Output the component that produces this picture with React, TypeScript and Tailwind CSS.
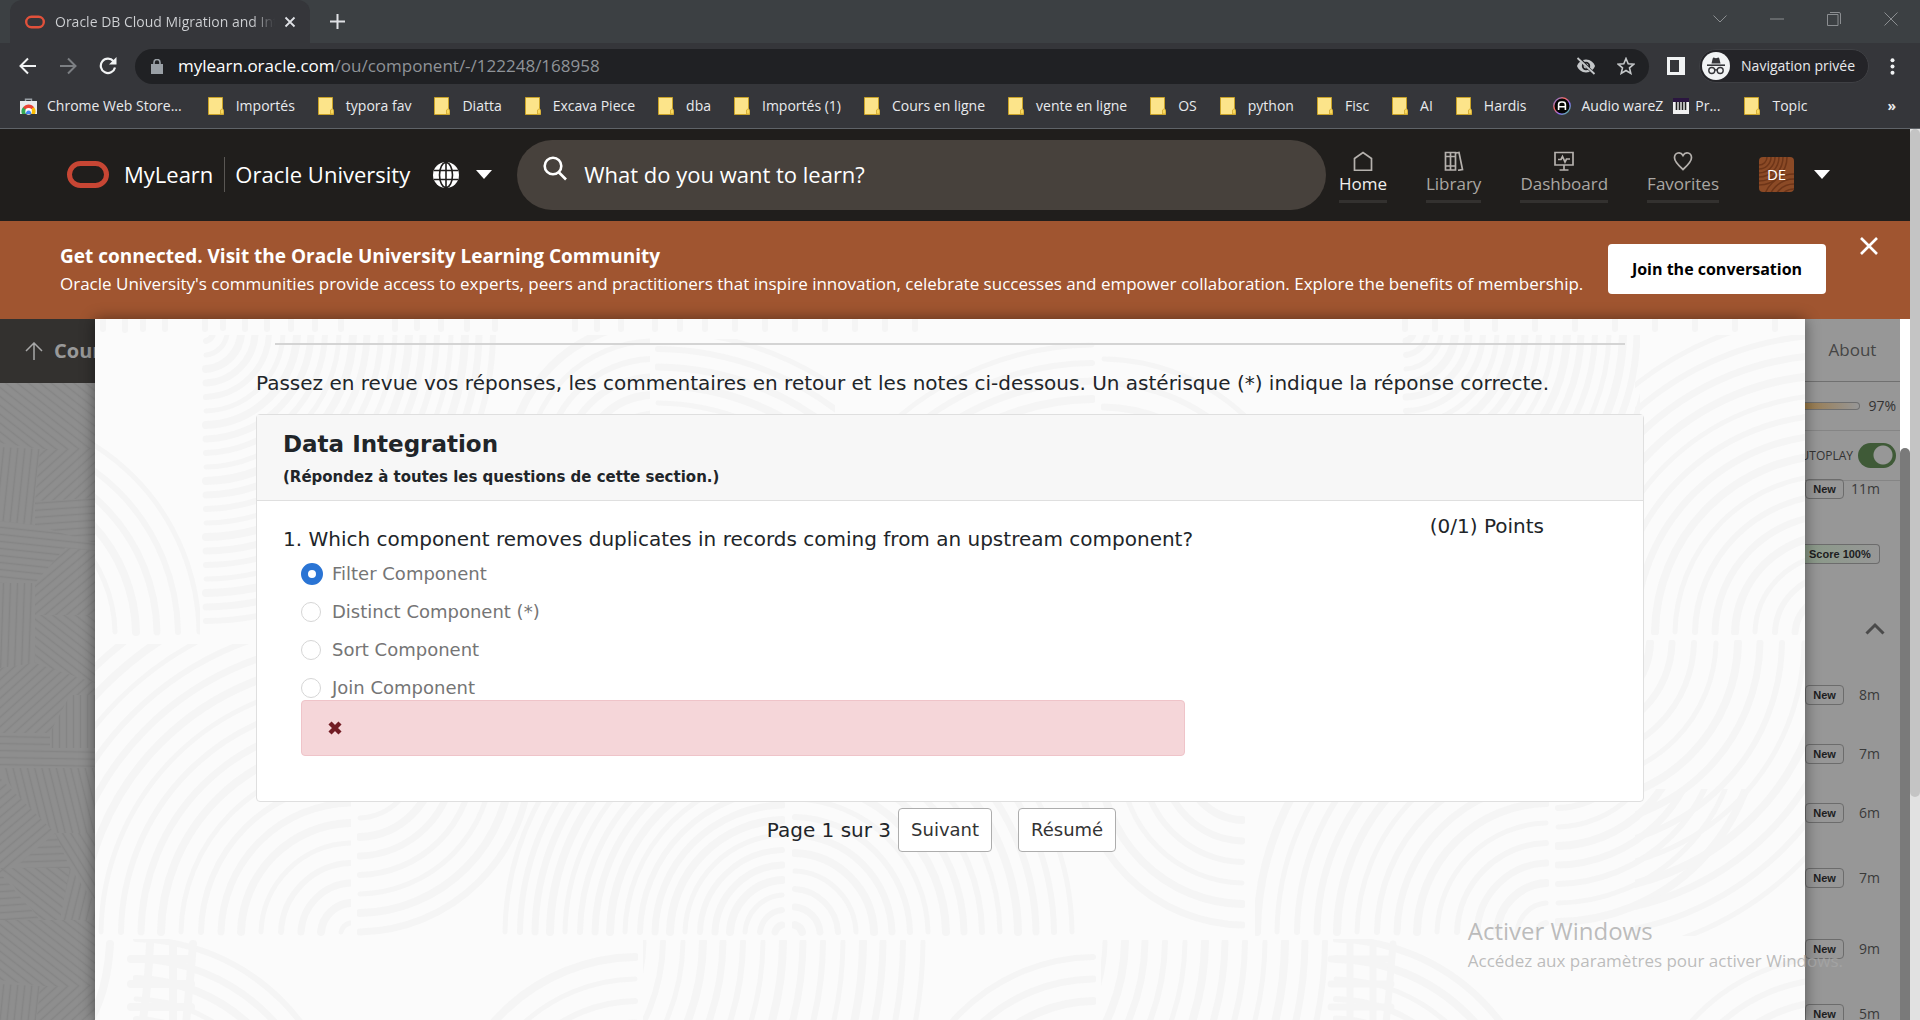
import React from "react";

const UI = "font-['Open_Sans',sans-serif]";
const ORACLE = "font-['Open_Sans',sans-serif]";
const EXAM = "font-['DejaVu_Sans',sans-serif]";

type Bookmark = { label: string; icon?: "store" | "audio" | "piano" };

const bookmarks: Bookmark[] = [
  { label: "Chrome Web Store...", icon: "store" },
  { label: "Importés" },
  { label: "typora fav" },
  { label: "Diatta" },
  { label: "Excava Piece" },
  { label: "dba" },
  { label: "Importés (1)" },
  { label: "Cours en ligne" },
  { label: "vente en ligne" },
  { label: "OS" },
  { label: "python" },
  { label: "Fisc" },
  { label: "AI" },
  { label: "Hardis" },
  { label: "Audio wareZ", icon: "audio" },
  { label: "Pr...", icon: "piano" },
  { label: "Topic" },
];

const bookmarkSpacing = {
  store: "mr-[26px] gap-[10px]",
  audio: "mr-[26px] ml-1 gap-[10px]",
  piano: "mr-[24px] -ml-4 gap-[6px]",
  folder: "mr-[23px] gap-3",
};

function FolderIcon() {
  return (
    <svg width="16" height="18" viewBox="0 0 16 18" className="shrink-0">
      <path d="M.5.5h14v13l1 1v3H.5z" fill="#fce48a" stroke="#c9a227" />
      <path d="M12.5 17v-4l2-1.5 1 2V17z" fill="#f9d95c" stroke="#d9b13a" />
    </svg>
  );
}

function StoreIcon() {
  return (
    <svg width="17" height="17" viewBox="0 0 17 17" className="shrink-0">
      <path d="M5.5 3V1.2h6V3" fill="none" stroke="#9aa0a6" strokeWidth="1.4" />
      <path d="M0 3h17v13H0z" fill="#e8eaed" />
      <path d="M2 16a6.6 6.6 0 0 1 2-7.6L8 14v2z" fill="#34a853" />
      <path d="M3.2 9.4a6.6 6.6 0 0 1 11 0L12 11H5z" fill="#ea4335" />
      <path d="M14 9.3a6.6 6.6 0 0 1 1 6.7H9l3-5.4z" fill="#fbbc04" />
      <circle cx="8.6" cy="13.4" r="3.3" fill="#fff" />
      <path d="M6 16a2.7 2.7 0 1 1 5.2 0z" fill="#4285f4" />
    </svg>
  );
}

function AudioIcon() {
  return (
    <svg width="18" height="18" viewBox="0 0 18 18" className="shrink-0">
      <defs>
        <linearGradient id="ring" x1="0" y1="0" x2="1" y2="1">
          <stop offset="0" stopColor="#5b7cff" />
          <stop offset=".35" stopColor="#ff6a5b" />
          <stop offset=".65" stopColor="#8b6cff" />
          <stop offset="1" stopColor="#4ad07a" />
        </linearGradient>
      </defs>
      <circle cx="9" cy="9" r="8.2" fill="#050505" stroke="url(#ring)" strokeWidth="1.4" />
      <path d="M5.6 13V7.6Q5.6 5 8.2 5h1.6q2.6 0 2.6 2.6V13M5.6 9.8h6.8" fill="none" stroke="#fff" strokeWidth="1.6" />
    </svg>
  );
}

function PianoIcon() {
  return (
    <svg width="16" height="16" viewBox="0 0 16 16" className="shrink-0">
      <path d="M0 0h16v5H0z" fill="#2b1640" />
      <path d="M0 4h16v12H0z" fill="#f1f1f1" />
      <path d="M3.5 4v8M6.5 4v8M9.5 4v8M12.5 4v8" stroke="#222" strokeWidth="1.6" />
    </svg>
  );
}

function OracleRing({ className, stroke }: { className: string; stroke: number }) {
  return (
    <svg viewBox="0 0 42 27" className={className}>
      <rect
        x={stroke / 2}
        y={stroke / 2}
        width={42 - stroke}
        height={27 - stroke}
        rx={(27 - stroke) / 2}
        fill="none"
        stroke="currentColor"
        strokeWidth={stroke}
      />
    </svg>
  );
}

function BrowserChrome() {
  return (
    <div className={`${UI} shrink-0 bg-[#35363a] text-[#e8eaed]`}>
      <div className="flex h-[43px] items-stretch bg-[#3c4043]">
        <div className="ml-[10px] flex w-[300px] items-center rounded-t-xl bg-[#35363a] pl-[15px]">
          <OracleRing className="h-[14px] w-5 text-[#e2513b]" stroke={5} />
          <div className="ml-[10px] w-[220px] overflow-hidden whitespace-nowrap bg-gradient-to-r from-[#d0d2d5] from-90% to-[#35363a] bg-clip-text text-sm text-transparent">
            Oracle DB Cloud Migration and Integ
          </div>
          <button aria-label="Fermer l'onglet" className="ml-[9px] text-[#dfe1e5]">
            <svg width="12" height="12" viewBox="0 0 12 12"><path d="M1.5 1.5l9 9M10.5 1.5l-9 9" stroke="currentColor" strokeWidth="1.8" /></svg>
          </button>
        </div>
        <button aria-label="Nouvel onglet" className="ml-5 text-[#dfe1e5]">
          <svg width="15" height="15" viewBox="0 0 15 15"><path d="M7.5 0v15M0 7.5h15" stroke="currentColor" strokeWidth="2" /></svg>
        </button>
        <div className="ml-auto flex items-center gap-[43px] pr-[22px] pb-[6px] text-[#8b8e91]">
          <svg width="14" height="8" viewBox="0 0 14 8"><path d="M.5.5L7 7 13.500.5" fill="none" stroke="currentColor" /></svg>
          <svg width="14" height="2" viewBox="0 0 14 2"><path d="M0 1h14" stroke="currentColor" /></svg>
          <svg width="14" height="14" viewBox="0 0 14 14"><path d="M.5 2.500h10.500v11H.5zM3 .5h9q1.500 0 1.500 1.500V12" fill="none" stroke="currentColor" /></svg>
          <svg width="14" height="14" viewBox="0 0 14 14"><path d="M.5.5l13 13M13.500.5l-13 13" stroke="currentColor" /></svg>
        </div>
      </div>

      <div className="flex h-[45px] items-center pt-[1px] pr-[25px] pl-[19px]">
        <button aria-label="Précédent">
          <svg width="18" height="18" viewBox="0 0 18 18"><path d="M17 9H2M9 1.500L1.500 9 9 16.500" fill="none" stroke="#f1f3f4" strokeWidth="2" /></svg>
        </button>
        <button aria-label="Suivant" className="ml-[22px]">
          <svg width="18" height="18" viewBox="0 0 18 18"><path d="M1 9h15M9 1.500L16.500 9 9 16.500" fill="none" stroke="#7c7f83" strokeWidth="2" /></svg>
        </button>
        <button aria-label="Actualiser" className="ml-[22px]">
          <svg width="18" height="18" viewBox="0 0 18 18"><path d="M14.500 4.200A7.200 7.200 0 1 0 16 10.500" fill="none" stroke="#f1f3f4" strokeWidth="2.200" /><path d="M17.500 0v7.500H10z" fill="#f1f3f4" /></svg>
        </button>
        <div className="ml-[18px] flex h-[35px] flex-1 items-center rounded-full bg-[#202124] pr-[14px] pl-4">
          <svg width="12" height="15" viewBox="0 0 12 15"><path d="M0 5h12v10H0z" fill="#9aa0a6" /><path d="M3 6V3.500a3 3 0 0 1 6 0V6" fill="none" stroke="#9aa0a6" strokeWidth="1.600" /></svg>
          <div className="ml-[15px] flex-1 text-[17px] text-[#8f9398]">
            <span className="text-white">mylearn.oracle.com</span>/ou/component/-/122248/168958
          </div>
          <button aria-label="Cookies tiers bloqués">
            <svg width="20" height="18" viewBox="0 0 20 18">
              <path d="M10 2.500C5.500 2.500 2.300 5.500 1 9c1.300 3.500 4.500 6.500 9 6.500s7.700-3 9-6.500c-1.300-3.500-4.500-6.500-9-6.500z" fill="#c4c7c9" />
              <circle cx="10" cy="9" r="4.200" fill="#202124" /><circle cx="10" cy="9" r="2.400" fill="#c4c7c9" />
              <path d="M1.500-.5l17 18" stroke="#202124" strokeWidth="3" /><path d="M1.500 1l17 16" stroke="#c4c7c9" strokeWidth="1.800" />
            </svg>
          </button>
          <button aria-label="Ajouter aux favoris" className="ml-[21px]">
            <svg width="18" height="18" viewBox="0 0 18 18"><path d="M9 1.500l2.200 5.200 5.600.5-4.300 3.700 1.300 5.500L9 13.500l-4.800 2.900 1.300-5.500L1.200 7.200l5.600-.5z" fill="none" stroke="#c4c7c9" strokeWidth="1.600" /></svg>
          </button>
        </div>
        <button aria-label="Panneau latéral" className="ml-[18px]">
          <svg width="18" height="18" viewBox="0 0 18 18"><path d="M0 0h18v18H0z" fill="#f1f3f4" /><path d="M3 3h9v12H3z" fill="#35363a" /></svg>
        </button>
        <button className="ml-[14px] flex h-[34px] items-center rounded-full border border-[#3f4044] bg-[#242428] pr-[13px] pl-[2px]">
          <svg width="28" height="28" viewBox="0 0 28 28">
            <circle cx="14" cy="14" r="14" fill="#f1f3f4" />
            <path d="M9.500 11.500l1.200-5q.4-1.200 1.600-.8l1.700.5 1.700-.5q1.200-.4 1.600.8l1.200 5z" fill="#35363a" />
            <path d="M5 13.200h18" stroke="#35363a" strokeWidth="1.600" />
            <circle cx="9.800" cy="18.500" r="3" fill="none" stroke="#35363a" strokeWidth="1.400" />
            <circle cx="18.200" cy="18.500" r="3" fill="none" stroke="#35363a" strokeWidth="1.400" />
            <path d="M12.800 18.200q1.200-.8 2.400 0" fill="none" stroke="#35363a" strokeWidth="1.400" />
          </svg>
          <span className="ml-[11px] text-sm">Navigation privée</span>
        </button>
        <button aria-label="Menu" className="ml-[21px]">
          <svg width="5" height="17" viewBox="0 0 5 17" fill="#f1f3f4"><circle cx="2.500" cy="2.200" r="2" /><circle cx="2.500" cy="8.500" r="2" /><circle cx="2.500" cy="14.800" r="2" /></svg>
        </button>
      </div>

      <div className="flex h-[41px] items-center border-b border-[#5f6368] pr-6 pb-[4px] pl-5 text-sm whitespace-nowrap">
        {bookmarks.map((b) => (
          <a key={b.label} href="#" className={`flex items-center ${bookmarkSpacing[b.icon ?? "folder"]}`}>
            {b.icon === "store" && <StoreIcon />}
            {b.icon === "audio" && <AudioIcon />}
            {b.icon === "piano" && <PianoIcon />}
            {!b.icon && <FolderIcon />}
            {b.label}
          </a>
        ))}
        <button aria-label="Autres favoris" className="ml-auto font-bold">»</button>
      </div>
    </div>
  );
}

const navItems = [
  { label: "Home", active: true, icon: <path d="M1.500 7.500L10 1.500l8.500 6v11.800h-17z" /> },
  { label: "Library", active: false, icon: <path d="M1.500 1.500h5v17.500h-5zM6.500 1.500h5v17.500h-5zM1.500 5.500h10M1.500 15h10M12 2l3-.5L18.500 18.500l-4.500.8" /> },
  { label: "Dashboard", active: false, icon: <path d="M1 1.500h18v12.500H1zM10 14v5M5.500 19h9M4 8.500h3l1.500-3 2.500 5.500 1.500-3H16" /> },
  { label: "Favorites", active: false, icon: <path d="M10 18.500C6 15 1.500 11 1.500 6.800c0-5.300 6-6.800 8.500-2.300 2.500-4.500 8.500-3 8.500 2.300 0 4.200-4.500 8.200-8.500 11.700z" /> },
];

function Caret() {
  return <svg width="16" height="9" viewBox="0 0 16 9"><path d="M0 0h16L8 9z" fill="#fff" /></svg>;
}

function SiteHeader() {
  return (
    <header className={`${ORACLE} flex h-[92px] shrink-0 items-center bg-[#201e1c] pr-[80px] pb-px pl-[67px] text-white`}>
      <OracleRing className="h-[27px] w-[42px] shrink-0 text-[#c74634]" stroke={5} />
      <a href="#" className="ml-[15px] border-r border-[#5a5754] pr-[11px] text-[22px] leading-[35px]">MyLearn</a>
      <a href="#" className="ml-[10px] text-[22px] leading-[35px] whitespace-nowrap">Oracle University</a>
      <button aria-label="Langue" className="ml-[23px] flex shrink-0 items-center gap-[17px]">
        <svg width="26" height="26" viewBox="0 0 26 26">
          <circle cx="13" cy="13" r="13" fill="#fff" />
          <path d="M13 0v26M1 8.500h24M1 17.500h24" stroke="#201e1c" strokeWidth="1.600" />
          <ellipse cx="13" cy="13" rx="6.500" ry="12.500" fill="none" stroke="#201e1c" strokeWidth="1.600" />
        </svg>
        <Caret />
      </button>
      <label className="ml-[25px] flex h-[70px] flex-1 items-center rounded-full bg-[#47413c] pl-[26px]">
        <svg width="25" height="25" viewBox="0 0 25 25" className="mb-3" fill="none" stroke="#fff" strokeWidth="2.600"><circle cx="10" cy="10" r="8.300" /><path d="M15.500 16l7.500 7.500" /></svg>
        <input
          type="search"
          aria-label="Recherche"
          placeholder="What do you want to learn?"
          className="ml-4 min-w-0 flex-1 bg-transparent text-[22px] text-white outline-none placeholder:text-white"
        />
      </label>
      <nav className="ml-[13px] flex gap-[39px]">
        {navItems.map((n) => (
          <a key={n.label} href="#" className="flex flex-col items-center border-b-[3px] border-[#33312f] pb-[4px]">
            <svg width="20" height="20" viewBox="0 0 20 20" fill="none" stroke="#b5b1ad" strokeWidth="1.700" className="mt-1">{n.icon}</svg>
            <span className={`mt-px text-[17px] leading-6 ${n.active ? "text-[#f1efed]" : "text-[#aaa7a3]"}`}>{n.label}</span>
          </a>
        ))}
      </nav>
      <button className="ml-10 flex shrink-0 items-center gap-5">
        <span className="relative grid h-[35px] w-[35px] place-items-center overflow-hidden rounded bg-[#8b4a26] text-[15px]">
          <svg viewBox="0 0 35 35" className="absolute inset-0" fill="none" stroke="#6e3518" strokeWidth="1.500">
            {[8, 12, 16, 20, 24, 28].map((r) => <circle key={r} cx="0" cy="0" r={r} />)}
            {[10, 15, 20, 25].map((r) => <circle key={r} cx="35" cy="48" r={r + 6} />)}
          </svg>
          <span className="relative">DE</span>
        </span>
        <Caret />
      </button>
    </header>
  );
}

function Banner() {
  return (
    <section className={`${ORACLE} flex h-[98px] shrink-0 items-center bg-[#a05530] pl-[60px] text-white`}>
      <div className="min-w-0 flex-1 whitespace-nowrap">
        <h2 className="text-[19px] leading-7 font-bold">Get connected. Visit the Oracle University Learning Community</h2>
        <p className="text-[17px] leading-7">
          Oracle University's communities provide access to experts, peers and practitioners that inspire innovation, celebrate successes and empower collaboration. Explore the benefits of membership.
        </p>
      </div>
      <button className="mb-[2px] h-[50px] w-[218px] shrink-0 rounded bg-white text-base font-bold text-black">Join the conversation</button>
      <button aria-label="Fermer" className="mt-4 mr-8 ml-[34px] shrink-0 self-start">
        <svg width="18" height="18" viewBox="0 0 18 18"><path d="M1 1l16 16M17 1L1 17" stroke="#fff" strokeWidth="2.600" /></svg>
      </button>
    </section>
  );
}

type Quad = "ul" | "ur" | "ll" | "lr";
type Swirl = { cx: number; cy: number; from: number; to: number; step: number; q: Quad; box: [number, number, number, number] };

const swirls: Swirl[] = [
  { cx: -120, cy: 316, from: 140, to: 225, step: 21, q: "ur", box: [0, 0, 105, 317] },
  { cx: 108, cy: 12, from: 10, to: 302, step: 14, q: "lr", box: [105, 16, 300, 320] },
  { cx: 560, cy: 150, from: 20, to: 150, step: 18, q: "ul", box: [405, 16, 150, 200] },
  { cx: 560, cy: 330, from: 120, to: 320, step: 18, q: "ur", box: [560, 20, 180, 200] },
  { cx: 1000, cy: 330, from: 160, to: 320, step: 18, q: "ul", box: [700, 20, 300, 200] },
  { cx: 1006, cy: 250, from: 90, to: 230, step: 24, q: "ur", box: [1006, 10, 220, 200] },
  { cx: 1308, cy: 12, from: 10, to: 302, step: 14, q: "lr", box: [1305, 16, 240, 320] },
  { cx: 1740, cy: 316, from: 20, to: 330, step: 20, q: "ul", box: [1540, 16, 170, 300] },
  { cx: 258, cy: 616, from: 12, to: 440, step: 20, q: "ul", box: [0, 325, 256, 292] },
  { cx: 262, cy: 440, from: 40, to: 176, step: 19, q: "lr", box: [262, 470, 300, 147] },
  { cx: 690, cy: 616, from: 10, to: 290, step: 15, q: "ul", box: [400, 330, 290, 287] },
  { cx: 697, cy: 616, from: 10, to: 290, step: 18, q: "ur", box: [697, 330, 300, 287] },
  { cx: 1150, cy: 440, from: 40, to: 176, step: 21, q: "ll", box: [960, 470, 190, 147] },
  { cx: 1454, cy: 616, from: 12, to: 296, step: 20, q: "ul", box: [1160, 330, 294, 287] },
  { cx: 1460, cy: 400, from: 70, to: 216, step: 19, q: "lr", box: [1460, 470, 250, 147] },
  { cx: 1480, cy: 321, from: 75, to: 330, step: 22, q: "lr", box: [1540, 321, 170, 296] },
  { cx: 38, cy: 830, from: 70, to: 210, step: 20, q: "ur", box: [38, 620, 210, 300] },
  { cx: 543, cy: 830, from: 60, to: 208, step: 22, q: "ul", box: [340, 620, 203, 300] },
  { cx: 380, cy: 620, from: 168, to: 460, step: 20, q: "lr", box: [548, 621, 300, 300] },
  { cx: 1001, cy: 830, from: 60, to: 208, step: 22, q: "ul", box: [800, 620, 201, 300] },
  { cx: 840, cy: 620, from: 170, to: 400, step: 20, q: "lr", box: [1006, 621, 230, 300] },
  { cx: 1238, cy: 830, from: 70, to: 210, step: 20, q: "ur", box: [1238, 620, 210, 300] },
  { cx: 1740, cy: 830, from: 60, to: 208, step: 22, q: "ul", box: [1540, 620, 170, 300] },
];

const quadEnds: Record<Quad, [number, number]> = { ul: [-1, -1], ur: [1, -1], ll: [-1, 1], lr: [1, 1] };

function SwirlBackground() {
  return (
    <svg aria-hidden="true" className="absolute top-0 left-0" width="1710" height="900" fill="none" stroke="#f5f5f5" strokeLinecap="round">
      {swirls.map((s, i) => {
        const [sx, sy] = quadEnds[s.q];
        const arcs: React.ReactNode[] = [];
        for (let r = s.from, k = 0; r <= s.to; r += s.step, k++) {
          arcs.push(
            <path
              key={r}
              strokeWidth={5 + ((k * 3 + i) % 4)}
              d={`M${s.cx + sx * r} ${s.cy + sy * 3}A${r} ${r} 0 0 ${sx * sy > 0 ? 1 : 0} ${s.cx + sx * 3} ${s.cy + sy * r}`}
            />
          );
        }
        const [x, y, w, h] = s.box;
        return (
          <g key={i}>
            <clipPath id={`swirl${i}`}><rect x={x} y={y} width={w} height={h} /></clipPath>
            <g clipPath={`url(#swirl${i})`}>{arcs}</g>
          </g>
        );
      })}
      <path strokeWidth="6" d="M8-4v14M30-4v15M48-4v14M70-4v14M110-4v14M128-4v13M150-4v14M172-4v14M196-4v14M220-4v14M246-4v14M300-4v14M322-4v13M346-4v14M372-4v14M400-4v14M480-4v14M502-4v14M526-4v14M560-4v14M585-4v14M610-4v14M640-4v14M670-4v14M700-4v14M730-4v14M760-4v14M790-4v14M820-4v14M1310-4v14M1340-4v14M1372-4v14M1400-4v14M1440-4v14M1480-4v14M1520-4v14M1560-4v14M1600-4v14M1640-4v14M1680-4v14" />
      <path strokeWidth="8" d="M15 625q-3 50-22 80M55 625q-3 60-10 90M78 625v90M98 625q-4 50-8 90M36 640h60M36 665h60M36 688h60" />
      <path strokeWidth="7" d="M1255 625v90M1278 625v90M1298 625q-4 50-8 90M1236 640h60M1236 665h60M1236 688h60" />
    </svg>
  );
}

const hatches: [string, number][] = [
  ["0,0 40,0 88,66 40,66 0,60", 38],
  ["40,0 95,0 95,66 88,66", 38],
  ["0,64 40,66 35,110 35,142 0,138", 96],
  ["40,66 95,66 95,115 35,118", -42],
  ["35,118 95,115 95,160 35,142", -4],
  ["0,138 35,142 95,160 95,168 65,165 35,200 0,200", 6],
  ["35,232 35,200 65,165 95,168 95,232", -40],
  ["0,200 35,200 35,280 0,285", 92],
  ["35,232 95,232 95,300 35,280", 38],
  ["0,285 35,280 95,300 95,312 70,312 50,350 0,350", -42],
  ["70,312 95,312 95,365 50,365 50,350", 90],
  ["0,350 50,350 50,365 95,365 95,385 0,385", 1],
  ["0,385 95,385 95,450 55,450 15,410", 76],
  ["0,395 15,410 55,450 20,480 0,490", -40],
  ["20,480 55,450 70,485 20,485", -2],
  ["55,450 95,450 95,520 70,485", 58],
  ["0,485 70,485 60,537 40,537", 38],
  ["70,485 95,520 95,537 60,537", 104],
  ["0,490 40,537 0,537", -4],
];

function HatchedPanel() {
  return (
    <svg aria-hidden="true" className="w-full flex-1 bg-[#8e8e8e]" viewBox="0 0 95 637" preserveAspectRatio="xMinYMin slice">
      <defs>
        {hatches.map(([, angle], i) => (
          <pattern key={i} id={`hatch${i}`} width="7" height="7" patternUnits="userSpaceOnUse" patternTransform={`rotate(${angle})`}>
            <path d="M0 3.500h7" stroke="#858585" strokeWidth="1.600" />
          </pattern>
        ))}
        <g id="weave">{hatches.map(([points], i) => <polygon key={i} points={points} fill={`url(#hatch${i})`} />)}</g>
      </defs>
      <use href="#weave" />
      <use href="#weave" y="537" />
    </svg>
  );
}

const options = [
  { label: "Filter Component", checked: true },
  { label: "Distinct Component (*)", checked: false },
  { label: "Sort Component", checked: false },
  { label: "Join Component", checked: false },
];

function ExamModal() {
  return (
    <main className={`${EXAM} relative z-10 flex-1 overflow-hidden bg-[#fbfbfb] px-[161px] text-[#212529] shadow-[0_0_14px_rgba(0,0,0,0.45)]`}>
      <SwirlBackground />
      <div className="relative">
        <hr className="mx-[19px] mt-6 border-t-2 border-[#d4d4d4]" />
        <p className="mt-[23px] text-xl leading-[30px] whitespace-nowrap">
          Passez en revue vos réponses, les commentaires en retour et les notes ci-dessous. Un astérisque (*) indique la réponse correcte.
        </p>
        <section className="mt-4 rounded border border-[#dfdfdf] bg-white">
          <div className="h-[86px] border-b border-[#dfdfdf] bg-[#f7f7f7] pt-[13px] pl-[26px]">
            <h1 className="text-[23px] leading-8 font-bold">Data Integration</h1>
            <h2 className="mt-[3px] text-[15px] leading-7 font-bold">(Répondez à toutes les questions de cette section.)</h2>
          </div>
          <div className="flex h-[300px] justify-between pl-[26px]">
            <fieldset className="w-2/3 pt-[23px]">
              <legend className="contents text-xl leading-[30px] whitespace-nowrap">1. Which component removes duplicates in records coming from an upstream component?</legend>
              <div className="mt-2 mr-2 ml-[18px]">
                <div className="flex flex-col gap-[14px]">
                  {options.map((o) => (
                    <label key={o.label} className="flex h-6 items-center text-lg text-[#757575]">
                      <input
                        type="radio"
                        name="answer"
                        defaultChecked={o.checked}
                        className="mr-[11px] h-5 w-5 appearance-none rounded-full border border-[#d6d6d6] bg-white checked:mr-[9px] checked:h-[22px] checked:w-[22px] checked:border-[7px] checked:border-[#2a74d4]"
                      />
                      {o.label}
                    </label>
                  ))}
                </div>
                <div role="alert" className="flex h-14 items-center rounded border border-[#efc4c9] bg-[#f5d6d9] pl-[26px]">
                  <svg width="14" height="14" viewBox="0 0 14 14"><path d="M2 2l10 10M12 2L2 12" stroke="#721c24" strokeWidth="4.400" /></svg>
                </div>
              </div>
            </fieldset>
            <p className="mt-[10px] mr-[99px] text-xl leading-[30px]">(0/1) Points</p>
          </div>
        </section>
        <div className="mt-[6px] flex items-center justify-center pr-[17px] text-xl">
          <span className="mr-[7px]">Page 1 sur 3</span>
          <button className="mr-[26px] h-11 rounded border border-[#adadad] bg-white px-3 text-lg text-[#333]">Suivant</button>
          <button className="h-11 rounded border border-[#adadad] bg-white px-3 text-lg text-[#333]">Résumé</button>
        </div>
      </div>
    </main>
  );
}

const lessons = [
  { time: "8m", gap: "mt-[50px]" },
  { time: "7m", gap: "mt-[39px]" },
  { time: "6m", gap: "mt-[39px]" },
  { time: "7m", gap: "mt-[45px]" },
  { time: "9m", gap: "mt-[51px]" },
  { time: "5m", gap: "mt-[45px]" },
];

function Lesson({ time, gap }: { time: string; gap: string }) {
  return (
    <div className={`flex h-5 shrink-0 items-center justify-end pr-5 ${gap}`}>
      <span className="mr-auto flex h-5 w-[39px] items-center justify-center rounded border border-[#6c6c6c] font-['Liberation_Sans',sans-serif] text-[11px] font-bold text-[#1d1d1f]">New</span>
      <span className="text-sm text-[#3a3a3a]">{time}</span>
    </div>
  );
}

function CourseSidebar() {
  return (
    <aside className={`${ORACLE} flex w-[95px] shrink-0 flex-col overflow-hidden bg-[#979797] text-[#333]`}>
      <button className="h-[62px] shrink-0 text-[17px] text-[#454545]">About</button>
      <div className="flex h-[50px] shrink-0 items-center justify-end gap-2 border-t border-b border-t-[#707070] border-b-[#858585] pr-1 text-sm">
        <span className="h-2 flex-1 rounded-r-full border border-l-0 border-[#6f6f6f] bg-gradient-to-r from-[#9a7a48] to-[#979797]" />
        97%
      </div>
      <label className="flex h-[50px] shrink-0 items-center justify-end gap-[5px] border-b border-[#858585] pr-1 text-xs">
        AUTOPLAY
        <input
          type="checkbox"
          defaultChecked
          className="h-[25px] w-[38px] shrink-0 appearance-none rounded-full bg-[#3f5a37] bg-[radial-gradient(circle_at_25px_12px,#979797_9px,transparent_10px)]"
        />
      </label>
      <Lesson time="11m" gap="-mt-[2px]" />
      <div className="mt-[45px] flex h-5 shrink-0 items-center justify-end pr-5">
        <span className="flex h-5 w-[75px] items-center rounded-r border border-l-0 border-[#6c6c6c] bg-gradient-to-r from-[#8a9a88] to-[#979797] pl-1 font-['Liberation_Sans',sans-serif] text-[11px] font-bold whitespace-nowrap text-[#1d1d1f]">Score 100%</span>
      </div>
      <button aria-label="Réduire" className="mt-[58px] mr-[15px] self-end">
        <svg width="20" height="13" viewBox="0 0 20 13"><path d="M1.500 11.500L10 3l8.500 8.500" fill="none" stroke="#4a4a4a" strokeWidth="3" /></svg>
      </button>
      {lessons.map((l, i) => <Lesson key={i} time={l.time} gap={l.gap} />)}
    </aside>
  );
}

export default function App() {
  return (
    <div className="relative flex h-screen flex-col overflow-hidden bg-white">
      <BrowserChrome />
      <div className="flex min-h-0 flex-1">
        <div className="flex min-w-0 flex-1 flex-col">
          <SiteHeader />
          <Banner />
          <div className="flex min-h-0 flex-1">
            <aside className="flex w-[95px] shrink-0 flex-col overflow-hidden">
              <a href="#" className={`${ORACLE} flex h-16 shrink-0 items-center gap-[11px] bg-[#33312f] pl-[25px] text-xl font-bold text-[#999]`}>
                <svg width="18" height="18" viewBox="0 0 18 18" className="shrink-0"><path d="M9 18V1M1 9l8-8 8 8" fill="none" stroke="#a8a8a8" strokeWidth="1.500" /></svg>
                Course
              </a>
              <HatchedPanel />
            </aside>
            <ExamModal />
            <CourseSidebar />
            <div className="flex w-[10px] shrink-0 flex-col bg-white">
              <div className="mt-[129px] flex-1 rounded-t-full bg-[#7a7a7a]" />
            </div>
          </div>
        </div>
        <div className="w-[10px] shrink-0 bg-[#e1e1e1]">
          <div className="h-3/4 rounded-full bg-[#c4c4c4]" />
        </div>
      </div>
      <div className={`${UI} pointer-events-none absolute right-[77px] bottom-[45px] z-20 text-[rgba(167,167,167,0.75)]`}>
        <p className="text-2xl leading-8">Activer Windows</p>
        <p className="text-[17px] leading-7">Accédez aux paramètres pour activer Windows.</p>
      </div>
    </div>
  );
}
